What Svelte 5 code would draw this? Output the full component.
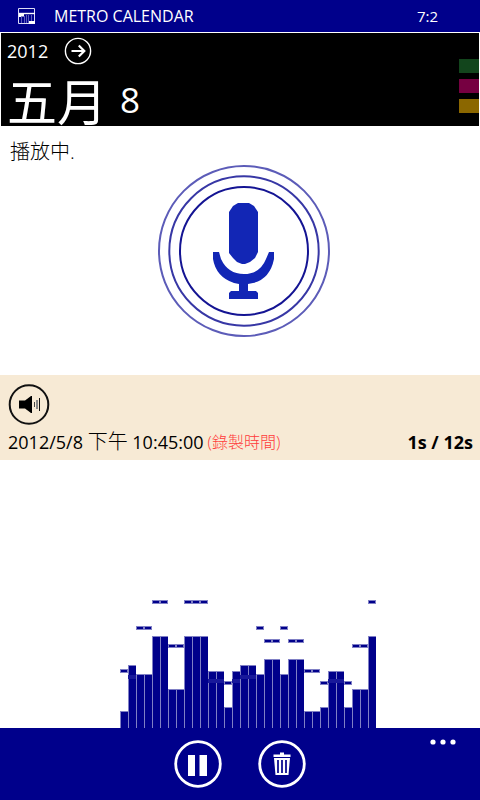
<script>
  const bars = [
    [17, 57], [63, 51], [54, 100], [54, 100], [92, 126], [92, 126], [39, 82], [39, 82],
    [92, 126], [92, 126], [92, 126], [57, 47], [57, 47], [21, 45], [57, 47], [63, 51],
    [63, 51], [54, 100], [69, 87], [69, 87], [54, 100], [69, 87], [69, 87], [17, 57],
    [17, 57], [21, 45], [57, 47], [57, 47], [21, 45], [39, 82], [39, 82], [92, 126]
  ].map(([level, peak]) => ({ level, peak }));
  let playing = $state(true);
</script>

<div class="page">
  <div class="status">
    <svg class="app-icon" width="18" height="16" viewBox="0 0 18 16" aria-hidden="true">
      <path d="M.5 .5h16v15H.5z" fill="none" stroke="#dcdcf5" />
      <path d="M1 5.5h16" stroke="#fff" stroke-width="1.4" />
      <path d="M1 6h5v2.500H3V9H1z" fill="#fff" />
      <path d="M3.5 9v6M6.5 8v7M8.5 7v8M10.5 7v8M13.5 7v6" stroke="#5c5cbc" />
      <path d="M11 13h6v3h-6z" fill="#fff" />
    </svg>
    <span class="app-name">METRO CALENDAR</span>
    <span class="clock">7:2</span>
  </div>

  <header>
    <div class="date">
      <div class="year-row">
        <span class="year">2012</span>
        <button class="next" aria-label="Next">
          <svg width="28" height="28" viewBox="0 0 28 28" fill="none" stroke="#fff">
            <circle cx="14" cy="14" r="12.6" stroke-width="1.4" />
            <path d="M7.5 14H20M14.8 8.5l5.5 5.5-5.5 5.5" stroke-width="2.2" />
          </svg>
        </button>
      </div>
      <h1><span class="month">五月</span><span class="day">8</span></h1>
    </div>
    <div class="tags">
      <span class="tag green"></span>
      <span class="tag pink"></span>
      <span class="tag gold"></span>
    </div>
  </header>

  <main>
    <section class="player">
      <p>播放中.</p>
      <div class="mic">
        <svg width="172" height="172" viewBox="0 0 172 172" aria-hidden="true">
          <g fill="none" stroke-width="2">
            <circle cx="86" cy="86" r="85" stroke="#5c5cb8" />
            <circle cx="86" cy="86" r="74.7" stroke="#3737a5" />
            <circle cx="86" cy="86" r="64" stroke="#141493" />
          </g>
          <g fill="#1226b5">
            <path d="M80 38h11l5 3 4 6v40l-3 6-5 4-5 2h-3l-5-2-4-4-4-5V47l4-6z" />
            <path d="M55 87h6l2 7q7 15 23 15 16 0 22-15l3-7h5v7q-4 20-21 24l-5 1v7h8l2 2v6H71v-6l2-2h8v-7l-5-1Q58 112 55 94z" />
          </g>
        </svg>
      </div>
    </section>

    <section class="recording">
      <button class="volume" aria-label="Volume">
        <svg width="42" height="42" viewBox="0 0 42 42">
          <circle cx="21" cy="21.500" r="19.300" fill="none" stroke="#111" stroke-width="2" />
          <path d="M11 17.500h6l6-4.500h1v17h-1l-6-4.500h-6z" fill="#000" />
          <path d="M26.500 19v5" stroke="#444" />
          <path d="M29 17v9" stroke="#888" stroke-width="2" />
          <path d="M31.500 15v13" stroke="#111" />
        </svg>
      </button>
      <div class="info">
        <span class="stamp">2012/5/8 <span class="period">下午</span> 10:45:00</span>
        <span class="note">(錄製時間)</span>
        <span class="progress">1s / 12s</span>
      </div>
    </section>

    <section class="spectrum" aria-label="Spectrum">
      {#each bars as { level, peak }}
        <div class="band">
          <div class="level" style:height="{level}px"></div>
          <div class="peak" class:covered={peak < level} style:bottom="{peak - 2}px"></div>
        </div>
      {/each}
    </section>
  </main>

  <footer>
    <button aria-label={playing ? 'Pause' : 'Play'} onclick={() => (playing = !playing)}>
      <svg width="48" height="48" viewBox="0 0 48 48">
        <circle cx="24" cy="24" r="22.300" fill="none" stroke="#fff" stroke-width="2.800" />
        {#if playing}
          <path d="M14 15h7v21h-7zM25.500 15h7.500v21h-7.500z" fill="#fff" />
        {:else}
          <path d="M17 13l18 11-18 11z" fill="#fff" />
        {/if}
      </svg>
    </button>
    <button aria-label="Delete">
      <svg width="48" height="48" viewBox="0 0 48 48">
        <circle cx="24" cy="24" r="22.300" fill="none" stroke="#fff" stroke-width="2.800" />
        <path d="M22 12.500h4v2h6.500v2.500h-17v-2.500H22z" fill="#fff" />
        <path d="M16 18h16l-1.500 17h-13z" fill="#fff" />
        <path d="M20 20v13M24 20v13M28 20v13" stroke="#00008b" stroke-width="1.700" />
      </svg>
    </button>
    <button class="more" aria-label="More">
      <svg width="28" height="8" viewBox="0 0 28 8" fill="#fff">
        <circle cx="4" cy="4" r="2.600" /><circle cx="14" cy="4" r="2.600" /><circle cx="24" cy="4" r="2.600" />
      </svg>
    </button>
  </footer>
</div>

<style>
  :global(body) { margin: 0; }
  .page {
    display: flex;
    flex-direction: column;
    min-height: 100vh;
    background: #fff;
    color: #000;
    font-family: "Open Sans", "Noto Sans CJK TC", sans-serif;
    font-size: 18px;
    line-height: 24px;
  }
  button {
    display: block;
    padding: 0;
    border: 0;
    background: none;
    cursor: pointer;
  }
  svg { display: block; }
  .status {
    display: flex;
    align-items: center;
    height: 32px;
    padding: 0 42px 0 18px;
    background: #00008b;
    color: #fff;
    font-size: 16px;
    box-sizing: border-box;
  }
  .app-name { flex: 1; margin-left: 18px; }
  .clock { font-size: 15px; }
  header {
    display: flex;
    justify-content: space-between;
    align-items: center;
    border: 1px solid #fff;
    border-bottom: 0;
    background: #000;
    color: #fff;
  }
  .date { padding: 4px 0 0 6px; }
  .year-row { display: flex; align-items: center; gap: 16px; }
  h1 {
    display: flex;
    align-items: flex-end;
    gap: 13px;
    margin: 0;
    padding-top: 8px;
    height: 53px;
    font-weight: 400;
    line-height: 53px;
  }
  .month { font-size: 50px; font-family: "Noto Sans CJK TC", sans-serif; }
  .day { font-size: 35px; }
  .tags { display: flex; flex-direction: column; gap: 6px; padding-top: 12px; }
  .tag { width: 20px; height: 14px; }
  .green { background: #12451c; }
  .pink { background: #760041; }
  .gold { background: #8b6700; }
  .player { padding: 14px 0 38px; }
  p { margin: 0 10px 1px; font-size: 20px; font-weight: 300; }
  .mic { display: flex; justify-content: center; padding-left: 8px; }
  .recording { padding: 8px 7px 6px 8px; background: #f7ead5; }
  .info { display: flex; align-items: center; margin-top: 5px; }
  .period { font-size: 20px; font-weight: 300; }
  .note { margin-left: 4px; color: #ff3b3b; font-size: 16px; font-weight: 300; }
  .progress { margin-left: auto; font-weight: 700; }
  main { display: flex; flex: 1; flex-direction: column; }
  .spectrum {
    display: flex;
    flex: 1;
    justify-content: center;
    padding-left: 16px;
    min-height: 160px;
  }
  .band { position: relative; display: flex; align-items: flex-end; width: 8px; }
  .level {
    width: 100%;
    box-sizing: border-box;
    border-top: 1px solid #8080c5;
    border-left: 1px solid #8080c5;
    background: #00008b;
  }
  .peak {
    position: absolute;
    left: 0;
    width: 8px;
    height: 4px;
    box-sizing: border-box;
    border: 1px solid #8080c5;
    background: #00008b;
  }
  .covered { border-color: transparent; background: #18189a; }
  footer {
    position: relative;
    display: flex;
    justify-content: center;
    gap: 36px;
    padding: 12px;
    background: #00008b;
  }
  .more { position: absolute; top: 10px; right: 23px; }
</style>
